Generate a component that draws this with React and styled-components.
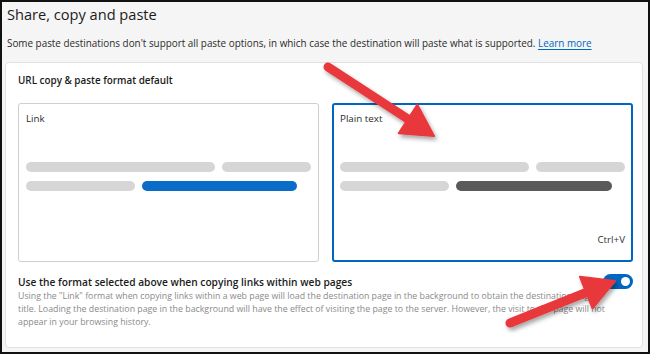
import React from 'react';
import styled, { createGlobalStyle } from 'styled-components';

const GlobalStyle = createGlobalStyle`
  html, body { margin: 0; padding: 0; background: #ffffff; }
  * { box-sizing: border-box; }
`;

const Shot = styled.div`
  position: relative;
  width: 650px;
  height: 354px;
`;

const Frame = styled.div`
  width: 650px;
  height: 354px;
  border: 2px solid #111;
  background: #f5f5f5;
  padding: 0 5px 0 3px;
  font-family: 'Open Sans', 'Noto Sans', sans-serif;
  color: #1b1b1b;
  overflow: hidden;
`;

const Title = styled.h1`
  margin: 1px 0 0 2px;
  font-size: 14.6px;
  font-weight: 400;
  line-height: 22px;
`;

const Intro = styled.p`
  margin: 10px 0 0 2px;
  font-size: 9.9px;
  line-height: 16px;
  color: #2b2b2b;
`;

const LearnMore = styled.a`
  color: #0067c0;
  text-decoration: underline;
  text-underline-offset: 2px;
`;

const Card = styled.section`
  margin-top: 11px;
  background: #fff;
  border: 1px solid #e2e2e2;
  border-radius: 4px;
  padding: 9px 9px 0 12px;
  height: 286px;
`;

const Heading = styled.div`
  font-size: 9.9px;
  font-weight: 600;
  line-height: 16px;
`;

const Options = styled.div`
  display: grid;
  grid-template-columns: 301px 301px;
  gap: 13px;
  margin-top: 15px;
`;

const Option = styled.div`
  height: 159px;
  border-radius: 3px;
  border: ${p => (p.selected ? '2px solid #0067c0' : '1px solid #cfcfcf')};
  padding: ${p => (p.selected ? '7px 6px 0 6px' : '8px 7px 0 7px')};
  display: flex;
  flex-direction: column;
`;

const OptionLabel = styled.div`
  font-size: 9.8px;
  line-height: 14px;
  color: #2a2a2a;
`;

const Lines = styled.div`
  margin-top: 36px;
  display: flex;
  flex-direction: column;
  gap: 9px;
`;

const LineRow = styled.div`
  display: flex;
  gap: 7px;
`;

const Bar = styled.div`
  height: 10px;
  border-radius: 5px;
  width: ${p => p.w}px;
  background: ${p => p.color || '#d6d6d6'};
`;

const Shortcut = styled.div`
  margin-top: auto;
  margin-bottom: 14px;
  align-self: flex-end;
  font-size: 9.8px;
  color: #333;
`;

const Setting = styled.div`
  display: grid;
  grid-template-columns: 1fr auto;
  align-items: start;
  margin-top: 12px;
`;

const SettingTitle = styled.div`
  font-size: 10.2px;
  font-weight: 600;
  line-height: 16px;
  color: #1b1b1b;
`;

const SettingHelp = styled.div`
  grid-column: 1 / -1;
  margin-top: 0;
  max-width: 592px;
  font-size: 8.8px;
  line-height: 13px;
  color: #8a8a8a;
`;

const Toggle = styled.div`
  width: 30px;
  height: 15px;
  border-radius: 8px;
  background: #0067c0;
  display: flex;
  align-items: center;
  justify-content: flex-end;
  padding-right: 3px;
`;

const Knob = styled.div`
  width: 9px;
  height: 9px;
  border-radius: 50%;
  background: #fff;
`;

const Overlay = styled.svg`
  position: absolute;
  top: 0;
  left: 0;
  pointer-events: none;
`;

function Arrow({ tail, tip }) {
  const dx = tip[0] - tail[0];
  const dy = tip[1] - tail[1];
  const len = Math.hypot(dx, dy);
  const ux = dx / len, uy = dy / len;
  const px = -uy, py = ux;
  const head = 31, half = 17;
  const bx = tip[0] - ux * head, by = tip[1] - uy * head;
  const pts = [
    [tip[0], tip[1]],
    [bx + px * half, by + py * half],
    [bx - px * half, by - py * half],
  ].map(p => p.join(',')).join(' ');
  return (
    <g filter="url(#shadow)">
      <line x1={tail[0]} y1={tail[1]} x2={bx + ux * 4} y2={by + uy * 4}
        stroke="#e8383b" strokeWidth="9" strokeLinecap="round" />
      <polygon points={pts} fill="#e8383b" stroke="#e8383b" strokeWidth="2" strokeLinejoin="round" />
    </g>
  );
}

export default function App() {
  return (
    <Shot>
      <GlobalStyle />
      <Frame>
        <Title>Share, copy and paste</Title>
        <Intro>
          Some paste destinations don't support all paste options, in which case the destination will paste what is supported.{' '}
          <LearnMore>Learn more</LearnMore>
        </Intro>
        <Card>
          <Heading>URL copy &amp; paste format default</Heading>
          <Options>
            <Option>
              <OptionLabel>Link</OptionLabel>
              <Lines>
                <LineRow><Bar w={190} /><Bar w={89} /></LineRow>
                <LineRow><Bar w={109} /><Bar w={155} color="#0a6cc9" /></LineRow>
              </Lines>
            </Option>
            <Option selected>
              <OptionLabel>Plain text</OptionLabel>
              <Lines>
                <LineRow><Bar w={190} /><Bar w={89} /></LineRow>
                <LineRow><Bar w={109} /><Bar w={156} color="#5a5a5a" /></LineRow>
              </Lines>
              <Shortcut>Ctrl+V</Shortcut>
            </Option>
          </Options>
          <Setting>
            <SettingTitle>Use the format selected above when copying links within web pages</SettingTitle>
            <Toggle><Knob /></Toggle>
            <SettingHelp>
              Using the "Link" format when copying links within a web page will load the destination page in the background to obtain the destination page's title. Loading the destination page in the background will have the effect of visiting the page to the server. However, the visit to the page will not appear in your browsing history.
            </SettingHelp>
          </Setting>
        </Card>
      </Frame>
      <Overlay width="650" height="354" viewBox="0 0 650 354">
        <defs>
          <filter id="shadow" x="-20%" y="-20%" width="140%" height="140%">
            <feDropShadow dx="2" dy="3" stdDeviation="2" floodColor="#000" floodOpacity="0.35" />
          </filter>
        </defs>
        <Arrow tail={[328, 67]} tip={[434, 136]} />
        <Arrow tail={[510, 323]} tip={[615, 281]} />
      </Overlay>
    </Shot>
  );
}
